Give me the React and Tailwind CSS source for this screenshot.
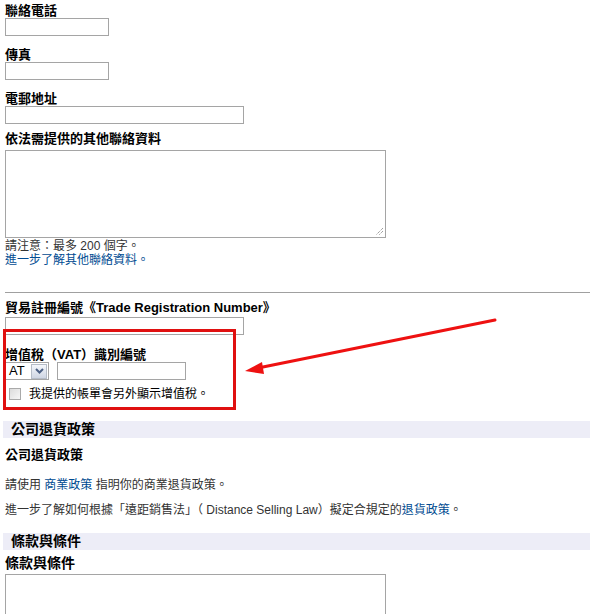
import React from "react";

const font = "font-['Liberation_Sans','Noto_Sans_CJK_TC',sans-serif]";

const Label = ({ children, className = "" }) => (
  <div className={`text-[13px] leading-[14px] font-bold text-black ${className}`}>{children}</div>
);

const Input = ({ className = "" }) => (
  <div className={`h-[18px] border border-[#a5a5a5] bg-white ${className}`} />
);

const SectionHeader = ({ children, className = "" }) => (
  <div className={`-ml-[2px] h-[17px] bg-[#ededf7] pl-[8px] text-[14px] leading-[17px] font-bold text-black ${className}`}>
    {children}
  </div>
);

export default function App() {
  return (
    <div className={`relative w-[590px] h-[614px] overflow-hidden bg-white pl-[5px] pt-[4px] ${font}`}>
      {/* contact fields */}
      <Label>聯絡電話</Label>
      <Input className="w-[104px]" />

      <Label className="mt-[12px]">傳真</Label>
      <Input className="w-[104px]" />

      <Label className="mt-[12px]">電郵地址</Label>
      <Input className="w-[239px]" />

      <Label className="mt-[8px]">依法需提供的其他聯絡資料</Label>
      <div className="relative mt-[4px] h-[88px] w-[381px] border border-[#a5a5a5] bg-white">
        <svg className="absolute right-[1px] bottom-[1px]" width="10" height="10" viewBox="0 0 10 10">
          <path d="M9 2 L2 9 M9 5 L5 9" stroke="#777" strokeWidth="1" strokeDasharray="1 1" />
        </svg>
      </div>
      <div className="mt-[1px] text-[12px] leading-[14px] text-[#333]">請注意：最多 200 個字。</div>
      <div className="text-[12px] leading-[14px] text-[#004b91]">進一步了解其他聯絡資料。</div>

      <div className="mt-[25px] h-px bg-[#a0a0a0]" />

      {/* trade registration */}
      <Label className="mt-[8px]">貿易註冊編號《Trade Registration Number》</Label>
      <Input className="mt-[2px] h-[17px] w-[239px]" />

      <Label className="mt-[13px]">增值稅（VAT）識別編號</Label>
      <div className="flex items-center gap-[8px]">
        <div className="flex h-[18px] w-[44px] items-center justify-between border border-[#a5a5a5] bg-white pl-[3px] pr-[1px]">
          <span className="text-[13px] leading-[16px] text-black">AT</span>
          <div className="flex h-[15px] w-[16px] items-center justify-center border border-[#b5bcc7] bg-gradient-to-b from-[#f4f6fb] to-[#cfd6e3]">
            <svg width="9" height="6" viewBox="0 0 9 6">
              <path d="M1 1 L4.5 4.5 L8 1" fill="none" stroke="#4d6185" strokeWidth="2" />
            </svg>
          </div>
        </div>
        <Input className="w-[129px]" />
      </div>
      <div className="mt-[7px] flex items-center gap-[8px] pl-[4px]">
        <div className="h-[12px] w-[12px] border border-[#a9a9a9] bg-gradient-to-br from-[#dcdcdc] to-[#f7f7f7]" />
        <span className="text-[12px] leading-[14px] text-black">我提供的帳單會另外顯示增值稅。</span>
      </div>

      {/* return policy */}
      <SectionHeader className="mt-[20px]">公司退貨政策</SectionHeader>
      <Label className="mt-[10px]">公司退貨政策</Label>
      <div className="mt-[16px] text-[12px] leading-[14px] text-[#333]">
        請使用 <span className="text-[#004b91]">商業政策</span> 指明你的商業退貨政策。
      </div>
      <div className="mt-[11px] text-[12px] leading-[14px] text-[#333]">
        進一步了解如何根據「遠距銷售法」（ Distance Selling Law）擬定合規定的<span className="text-[#004b91]">退貨政策</span>。
      </div>

      {/* terms */}
      <SectionHeader className="mt-[16px]">條款與條件</SectionHeader>
      <Label className="mt-[6px] text-[14px] leading-[15px]">條款與條件</Label>
      <div className="mt-[3px] h-[88px] w-[381px] border border-[#a5a5a5] bg-white" />

      {/* annotation overlay */}
      <div className="pointer-events-none absolute left-[3px] top-[329px] h-[81px] w-[233px] border-[3px] border-[#e01010]" />
      <svg className="pointer-events-none absolute left-0 top-0" width="590" height="614" viewBox="0 0 590 614">
        <line x1="495" y1="320" x2="258" y2="368" stroke="#ee1111" strokeWidth="3" strokeLinecap="round" />
        <path d="M245 371 L262 362 L264 374 Z" fill="#ee1111" />
      </svg>
    </div>
  );
}
